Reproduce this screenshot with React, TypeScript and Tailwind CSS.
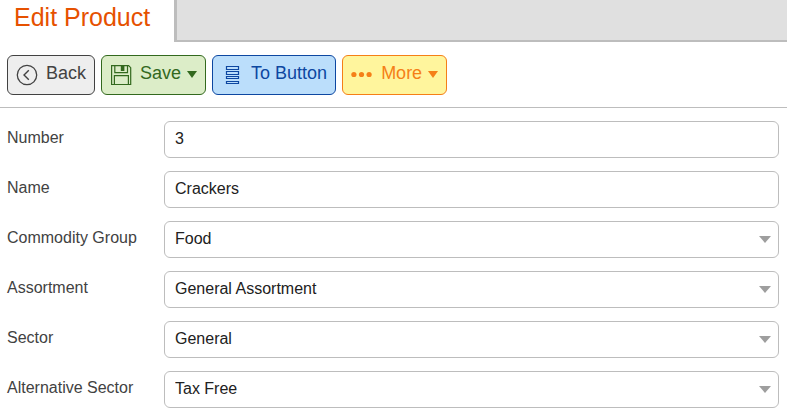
import type { ReactNode } from "react";

function BackIcon() {
  return (
    <svg width="22" height="22" viewBox="0 0 22 22" fill="none" stroke="currentColor" aria-hidden="true">
      <circle cx="11" cy="11" r="9.7" strokeWidth="1.3" />
      <path d="M12.8 6.2 8 11l4.8 4.8" strokeWidth="1.4" />
    </svg>
  );
}

function SaveIcon() {
  return (
    <svg width="22" height="22" viewBox="0 0 22 22" fill="none" stroke="currentColor" strokeWidth="1.2" aria-hidden="true">
      <path d="M1.6 1.6h17l2.1 2.1v16.8H1.6z" />
      <path d="M4.8 1.6v7h12.7v-7" />
      <path d="M4.4 20.4v-8.8h14v8.8" />
      <path d="M10.8 2h3.6v5h-3.6z" fill="currentColor" stroke="none" />
    </svg>
  );
}

function ListIcon() {
  return (
    <svg width="22" height="22" viewBox="0 0 22 22" fill="none" stroke="currentColor" strokeWidth="1.2" aria-hidden="true">
      <path d="M5.5 2.5h12v3h-12zM5.5 7.5h12v3h-12zM5.5 12.5h12v2h-12zM5.5 17.5h12v2h-12z" />
    </svg>
  );
}

function DotsIcon() {
  return (
    <svg width="22" height="22" viewBox="0 0 22 22" fill="currentColor" aria-hidden="true">
      <circle cx="2.9" cy="10.5" r="2.6" />
      <circle cx="10.5" cy="10.5" r="2.6" />
      <circle cx="18.1" cy="10.5" r="2.6" />
    </svg>
  );
}

function Caret() {
  return (
    <svg width="10" height="7" viewBox="0 0 10 7" fill="currentColor" aria-hidden="true">
      <path d="M0 0h10L5 7z" />
    </svg>
  );
}

type ToolButtonProps = {
  icon: ReactNode;
  label: string;
  colors: string;
  menu?: boolean;
};

function ToolButton({ icon, label, colors, menu = false }: ToolButtonProps) {
  return (
    <button
      type="button"
      aria-haspopup={menu ? "menu" : undefined}
      className={`flex h-10 items-center rounded-md border px-2 text-lg ${colors}`}
    >
      {icon}
      <span className="ml-2 pb-1">{label}</span>
      {menu && (
        <span className="ml-1.5 pb-0.5">
          <Caret />
        </span>
      )}
    </button>
  );
}

const fields = [
  { id: "number", label: "Number", value: "3", select: false },
  { id: "name", label: "Name", value: "Crackers", select: false },
  { id: "commodity-group", label: "Commodity Group", value: "Food", select: true },
  { id: "assortment", label: "Assortment", value: "General Assortment", select: true },
  { id: "sector", label: "Sector", value: "General", select: true },
  { id: "alternative-sector", label: "Alternative Sector", value: "Tax Free", select: true },
];

const control =
  "h-[37px] w-full appearance-none rounded-md border border-[#bdbdbd] bg-white px-2.5 pb-0.5 text-base text-[#212121]";

export default function App() {
  return (
    <div className="bg-white font-['Liberation_Sans',Arial,sans-serif] text-[#424242]">
      <header className="flex h-[42px]">
        <h1 className="w-[174px] shrink-0 pl-3.5 text-[25px] leading-[34px] text-[#e65100]">Edit Product</h1>
        <div className="flex-1 border-b-2 border-l-3 border-[#bdbdbd] bg-[#e0e0e0]" />
      </header>

      <div className="flex gap-1.5 border-b border-[#bdbdbd] px-[7px] pt-[13px] pb-3">
        <ToolButton icon={<BackIcon />} label="Back" colors="border-[#424242] bg-[#eeeeee] text-[#424242]" />
        <ToolButton icon={<SaveIcon />} label="Save" menu colors="border-[#33691e] bg-[#dcedc8] text-[#33691e]" />
        <ToolButton icon={<ListIcon />} label="To Button" colors="border-[#0d47a1] bg-[#bbdefb] text-[#0d47a1]" />
        <ToolButton icon={<DotsIcon />} label="More" menu colors="border-[#f57f17] bg-[#fff59d] text-[#f57f17]" />
      </div>

      <form className="flex flex-col gap-[13px] pt-[13px] pr-2 pb-1.5 pl-[7px]">
        {fields.map((field) => (
          <div key={field.id} className="flex items-center">
            <label htmlFor={field.id} className="w-[157px] shrink-0 pb-1 text-base">
              {field.label}
            </label>
            {field.select ? (
              <div className="relative flex-1">
                <select id={field.id} className={control}>
                  <option>{field.value}</option>
                </select>
                <svg
                  className="pointer-events-none absolute top-[15px] right-2 text-[#9e9e9e]"
                  width="12"
                  height="7"
                  viewBox="0 0 12 7"
                  fill="currentColor"
                  aria-hidden="true"
                >
                  <path d="M0 0h12L6 7z" />
                </svg>
              </div>
            ) : (
              <div className="flex-1">
                <input id={field.id} type="text" defaultValue={field.value} className={control} />
              </div>
            )}
          </div>
        ))}
      </form>
    </div>
  );
}
